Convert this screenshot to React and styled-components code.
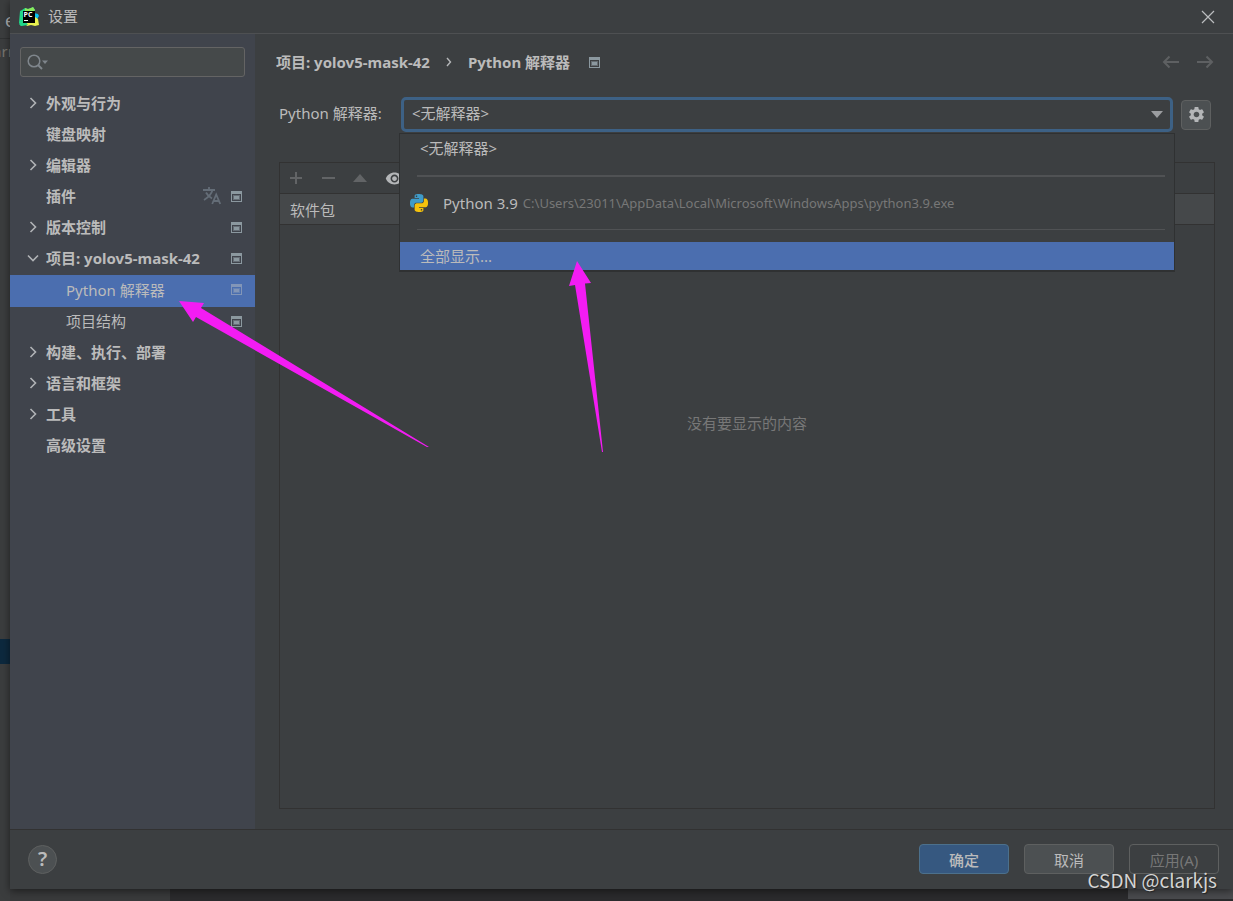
import styled, { createGlobalStyle } from 'styled-components';
import { MdSettings, MdVisibility } from 'react-icons/md';

const menuItems = [
  { label: '外观与行为', arrow: 'right' },
  { label: '键盘映射' },
  { label: '编辑器', arrow: 'right' },
  { label: '插件', translate: true, project: true },
  { label: '版本控制', arrow: 'right', project: true },
  { label: '项目: yolov5-mask-42', arrow: 'down', project: true },
  { label: 'Python 解释器', child: true, project: true, selected: true },
  { label: '项目结构', child: true, project: true },
  { label: '构建、执行、部署', arrow: 'right' },
  { label: '语言和框架', arrow: 'right' },
  { label: '工具', arrow: 'right' },
  { label: '高级设置' },
];

function App() {
  return (
    <>
      <GlobalStyle />
      <Styled.Desktop>
        <Backdrop />
        <Styled.Dialog>
          <TitleBar />
          <Styled.Body>
            <Sidebar />
            <InterpreterPage />
          </Styled.Body>
          <Footer />
        </Styled.Dialog>
        <Styled.StatusBar>
          <Styled.StatusTip />
        </Styled.StatusBar>
        <Pointers />
        <Styled.Watermark>CSDN @clarkjs</Styled.Watermark>
      </Styled.Desktop>
    </>
  );
}

export default App;

function Backdrop() {
  return (
    <Styled.Backdrop aria-hidden="true">
      <Styled.BackdropTab>e</Styled.BackdropTab>
      <Styled.BackdropText>arn</Styled.BackdropText>
      <Styled.BackdropSelection />
    </Styled.Backdrop>
  );
}

function TitleBar() {
  return (
    <Styled.TitleBar>
      <PyCharmIcon />
      <Styled.Title>设置</Styled.Title>
      <Styled.IconButton type="button" aria-label="关闭">
        <svg width="14" height="14" viewBox="0 0 14 14" stroke="#bbbdbf" strokeWidth="1.2">
          <path d="M1 1l12 12M13 1L1 13" />
        </svg>
      </Styled.IconButton>
    </Styled.TitleBar>
  );
}

function Sidebar() {
  return (
    <Styled.Sidebar>
      <Styled.Search>
        <SearchIcon />
        <Styled.SearchInput type="text" aria-label="搜索" />
      </Styled.Search>
      <Styled.Menu>
        {menuItems.map((item) => (
          <li key={item.label}>
            <Styled.MenuItem type="button" $child={item.child} $selected={item.selected}>
              <Styled.MenuArrow>{item.arrow && <Chevron down={item.arrow === 'down'} />}</Styled.MenuArrow>
              <Styled.MenuLabel>{item.label}</Styled.MenuLabel>
              {item.translate && <TranslateIcon />}
              {item.project && <ProjectIcon faded={item.selected} />}
            </Styled.MenuItem>
          </li>
        ))}
      </Styled.Menu>
    </Styled.Sidebar>
  );
}

function InterpreterPage() {
  return (
    <Styled.Page>
      <Styled.PageHeader>
        <Styled.Crumb>项目: yolov5-mask-42</Styled.Crumb>
        <svg width="6" height="10" viewBox="0 0 6 10" fill="none" stroke="#b5b7b9" strokeWidth="1.4">
          <path d="M1 1l3.5 4L1 9" />
        </svg>
        <Styled.Crumb>Python 解释器</Styled.Crumb>
        <Styled.CrumbIcon>
          <ProjectIcon />
        </Styled.CrumbIcon>
        <Styled.HistoryButtons>
          <Styled.IconButton type="button" aria-label="后退">
            <HistoryArrow />
          </Styled.IconButton>
          <Styled.IconButton type="button" aria-label="前进">
            <HistoryArrow forward />
          </Styled.IconButton>
        </Styled.HistoryButtons>
      </Styled.PageHeader>

      <Styled.Field>
        <Styled.Label htmlFor="interpreter">Python 解释器:</Styled.Label>
        <Styled.SelectWrapper>
          <Styled.Select id="interpreter" defaultValue="none">
            <option value="none">&lt;无解释器&gt;</option>
            <option value="python39">Python 3.9</option>
          </Styled.Select>
          <Styled.SelectArrow width="12" height="7" viewBox="0 0 12 7">
            <path d="M0 0h12L6 7z" fill="#9b9da0" />
          </Styled.SelectArrow>
          <Styled.Popup role="listbox" aria-label="Python 解释器">
            <Styled.Option type="button" role="option">
              &lt;无解释器&gt;
            </Styled.Option>
            <Styled.Separator $size={2} />
            <Styled.PythonOption type="button" role="option">
              <PythonIcon />
              <span>Python 3.9</span>
              <Styled.Path>C:\Users\23011\AppData\Local\Microsoft\WindowsApps\python3.9.exe</Styled.Path>
            </Styled.PythonOption>
            <Styled.Separator $size={1} />
            <Styled.Option type="button" role="option" aria-selected="true" $active>
              全部显示...
            </Styled.Option>
          </Styled.Popup>
        </Styled.SelectWrapper>
        <Styled.GearButton type="button" aria-label="解释器设置">
          <MdSettings size={19} />
        </Styled.GearButton>
      </Styled.Field>

      <Styled.Packages>
        <Styled.Toolbar>
          <Styled.IconButton type="button" aria-label="添加">
            <svg width="14" height="14" viewBox="0 0 14 14" stroke="#626466" strokeWidth="2">
              <path d="M7 1v12M1 7h12" />
            </svg>
          </Styled.IconButton>
          <Styled.IconButton type="button" aria-label="移除">
            <svg width="14" height="14" viewBox="0 0 14 14" stroke="#626466" strokeWidth="2">
              <path d="M1 7h13" />
            </svg>
          </Styled.IconButton>
          <Styled.IconButton type="button" aria-label="升级">
            <svg width="14" height="14" viewBox="0 0 14 14" fill="#626466">
              <path d="M0 11l7-8 7 8z" />
            </svg>
          </Styled.IconButton>
          <Styled.IconButton type="button" aria-label="显示早期版本">
            <MdVisibility size={19} color="#b4b6b8" />
          </Styled.IconButton>
        </Styled.Toolbar>
        <Styled.Table>
          <thead>
            <tr>
              <th scope="col">软件包</th>
            </tr>
          </thead>
        </Styled.Table>
        <Styled.Empty>没有要显示的内容</Styled.Empty>
      </Styled.Packages>
    </Styled.Page>
  );
}

function Footer() {
  return (
    <Styled.Footer>
      <Styled.HelpButton type="button" aria-label="帮助">
        ?
      </Styled.HelpButton>
      <Styled.FooterButtons>
        <Styled.Button type="button" $primary>
          确定
        </Styled.Button>
        <Styled.Button type="button">取消</Styled.Button>
        <Styled.Button type="button" disabled>
          应用(A)
        </Styled.Button>
      </Styled.FooterButtons>
    </Styled.Footer>
  );
}

function Pointers() {
  return (
    <Styled.Pointers width="620" height="460" viewBox="0 0 620 460" fill="#f31cf3">
      <path d="M179 301L204 303L201 308L429 447L427 447L196 317L193 322Z" />
      <path d="M577 261L591 283L585 283.500L603 452L602 452L575 285L569 286Z" />
    </Styled.Pointers>
  );
}

function PyCharmIcon() {
  return (
    <svg width="20" height="20" viewBox="0 0 20 20">
      <path d="M1 4l2-1 3-2 3 1 3-1 2-1 2 3-3 8-5 6-6 2-2-3z" fill="#21d789" />
      <path d="M6 1l3 1 3-1 2-1 2 3-2 3-8-1z" fill="#8bea5c" />
      <path d="M15 6l4 1 1 2-3 5-3-2z" fill="#07c3f2" />
      <path d="M5 15l11-5 3 2 1 6-4 1-4-1-4 1z" fill="#e9f24f" />
      <path d="M0 17l7-2 2 3-7 1z" fill="#21d789" />
      <rect x="4" y="4" width="12" height="12" fill="#000" />
      <rect x="5" y="13" width="4" height="1" fill="#fff" />
      <text x="4.500" y="10" fontFamily="Open Sans, sans-serif" fontSize="7" fontWeight="700" fill="#fff">
        PC
      </text>
    </svg>
  );
}

function SearchIcon() {
  return (
    <svg width="22" height="16" viewBox="0 0 22 16" fill="none" stroke="#7f868c" strokeWidth="1.500">
      <circle cx="7" cy="7" r="5.800" />
      <path d="M11 11l4 4" strokeWidth="2" />
      <path d="M15 6.500h6l-3 3.500z" fill="#7f868c" stroke="none" />
    </svg>
  );
}

function TranslateIcon() {
  return (
    <svg width="18" height="18" viewBox="0 0 18 18" fill="none" stroke="#646d77" strokeWidth="1.800">
      <path d="M0 3h12M6 0v3M9.500 3C8.500 7 5 10.500 1 13M3 5.500C4.500 8.500 6.500 10 9 11.500" />
      <path d="M9.200 17l4-9.500 4 9.500M10.500 14h5.500" />
    </svg>
  );
}

function Chevron({ down }) {
  return (
    <svg width="12" height="12" viewBox="0 0 12 12" fill="none" stroke="#b0b3b6" strokeWidth="1.600">
      <path d={down ? 'M1 3.500l5 5 5-5' : 'M3.500 1l5 5-5 5'} />
    </svg>
  );
}

function ProjectIcon({ faded }) {
  return (
    <svg width="11" height="11" viewBox="0 0 11 11" fill={faded ? '#8296b8' : '#8b989f'}>
      <path d="M0 0h11v11H0zM1 3v7h9V3z" fillRule="evenodd" />
      <path d="M2 4h7v5H2z" opacity="0.500" />
      <path d="M3 5h5v3H3z" />
    </svg>
  );
}

function HistoryArrow({ forward }) {
  return (
    <svg width="18" height="14" viewBox="0 0 18 14" fill="none" stroke="#5e6062" strokeWidth="2">
      <path d={forward ? 'M1 7h15M10.500 1.500L16 7l-5.500 5.500' : 'M17 7H2M7.500 1.500L2 7l5.500 5.500'} />
    </svg>
  );
}

function PythonIcon() {
  return (
    <svg width="18" height="18" viewBox="0 0 24 24">
      <path
        fill="#3f9bc8"
        d="M14.25.18l.9.2.73.26.59.3.45.32.34.34.25.34.16.33.1.3.04.26.02.2-.01.13V8.5l-.05.63-.13.55-.21.46-.26.38-.3.31-.33.25-.35.19-.35.14-.33.1-.3.07-.26.04-.21.02H8.77l-.69.05-.59.14-.5.22-.41.27-.33.32-.27.35-.2.36-.15.37-.1.35-.07.32-.04.27-.02.21v3.06H3.17l-.21-.03-.28-.07-.32-.12-.35-.18-.36-.26-.36-.36-.35-.46-.32-.59-.28-.73-.21-.88-.14-1.05-.05-1.23.06-1.22.16-1.04.24-.87.32-.71.36-.57.4-.44.42-.33.42-.24.4-.16.36-.1.32-.05.24-.01h.16l.06.01h8.16v-.83H6.18l-.01-2.75-.02-.37.05-.34.11-.31.17-.28.25-.26.31-.23.38-.2.44-.18.51-.15.58-.12.64-.1.71-.06.77-.04.84-.02 1.27.05zm-6.3 1.98l-.23.33-.08.41.08.41.23.34.33.22.41.09.41-.09.33-.22.23-.34.08-.41-.08-.41-.23-.33-.33-.22-.41-.09-.41.09z"
      />
      <path
        fill="#f5c20c"
        d="M21.04 6.11l.28.06.32.12.35.18.36.27.36.35.35.47.32.59.28.73.21.88.14 1.04.05 1.23-.06 1.23-.16 1.04-.24.86-.32.71-.36.57-.4.45-.42.33-.42.24-.4.16-.36.09-.32.05-.24.02-.16-.01h-8.22v.82h5.84l.01 2.76.02.36-.05.34-.11.31-.17.29-.25.25-.31.24-.38.2-.44.17-.51.15-.58.13-.64.09-.71.07-.77.04-.84.01-1.27-.04-1.07-.14-.9-.2-.73-.25-.59-.3-.45-.33-.34-.34-.25-.34-.16-.33-.1-.3-.04-.25-.02-.2.01-.13v-5.34l.05-.64.13-.54.21-.46.26-.38.3-.32.33-.24.35-.2.35-.14.33-.1.3-.06.26-.04.21-.02.13-.01h5.84l.69-.05.59-.14.5-.21.41-.28.33-.32.27-.35.2-.36.15-.36.1-.35.07-.32.04-.28.02-.21V6.07h2.09zM14.57 20.36l-.23.33-.08.41.08.41.23.33.33.23.41.08.41-.08.33-.23.23-.33.08-.41-.08-.41-.23-.33-.33-.23-.41-.08-.41.08z"
      />
    </svg>
  );
}

const GlobalStyle = createGlobalStyle`
  * {
    box-sizing: border-box;
  }

  body {
    margin: 0;
    background: #3c3f41;
    color: #bbbbbb;
    font-family: 'Noto Sans', 'Noto Sans CJK SC', sans-serif;
    font-size: 15px;
    line-height: 20px;
  }

  button,
  input,
  select {
    margin: 0;
    color: inherit;
    font: inherit;
  }

  svg {
    flex-shrink: 0;
  }
`;

const IconButton = styled.button`
  display: flex;
  align-items: center;
  justify-content: center;
  padding: 0;
  border: none;

  background: transparent;
`;

const Option = styled.button`
  display: flex;
  align-items: center;
  width: 100%;
  height: 28px;
  padding: 0 20px;
  border: none;

  background: ${({ $active }) => ($active ? '#4b6eaf' : 'transparent')};
  text-align: left;
`;

const Styled = {
  Desktop: styled.div`
    position: relative;
    display: grid;
    grid-template-columns: 10px 1fr;
    grid-template-rows: 1fr 12px;
    min-height: 100vh;
    overflow: hidden;
  `,
  Backdrop: styled.div`
    grid-row: 1 / 3;
    overflow: hidden;

    background: #3b3d3e;
    color: #77756f;
  `,
  BackdropTab: styled.div`
    height: 39px;
    padding: 8px 0 0 5px;
    border-bottom: 1px solid #303233;

    color: #b0b0b0;
    font-size: 18px;
    line-height: 24px;
  `,
  BackdropText: styled.div`
    display: flex;
    justify-content: center;
    height: 600px;
    padding-top: 2px;
  `,
  BackdropSelection: styled.div`
    height: 25px;

    background: #0d293e;
  `,
  Dialog: styled.div`
    z-index: 1;
    display: flex;
    flex-direction: column;

    background: #3c3f41;
    box-shadow: 0 2px 8px rgba(0, 0, 0, 0.5);
  `,
  StatusBar: styled.div`
    display: flex;
    justify-content: flex-end;
    border-left: 160px solid #393a3b;

    background: #2b2b2d;
  `,
  StatusTip: styled.div`
    width: 105px;
    height: 10px;

    background: #4a4b4e;
  `,
  TitleBar: styled.header`
    display: flex;
    align-items: center;
    height: 34px;
    padding: 0 18px 0 9px;
    border-bottom: 1px solid #4e5052;
  `,
  Title: styled.h1`
    flex: 1;
    margin: 0 0 0 9px;
    padding-bottom: 2px;

    font-size: 15px;
    font-weight: 400;
  `,
  IconButton,
  Body: styled.div`
    display: flex;
    flex: 1;
  `,
  Sidebar: styled.nav`
    width: 245px;
    padding-top: 13px;

    background: #40444c;
  `,
  Search: styled.label`
    display: flex;
    align-items: center;
    height: 30px;
    margin: 0 10px;
    padding: 0 6px;
    border: 1px solid #646464;
    border-radius: 3px;

    background: #45494a;
  `,
  SearchInput: styled.input`
    flex: 1;
    min-width: 0;
    border: none;
    outline: none;

    background: transparent;
  `,
  Menu: styled.ul`
    margin: 12px 0 0;
    padding: 0;

    list-style: none;
  `,
  MenuItem: styled.button`
    display: flex;
    align-items: center;
    gap: 10px;
    width: 100%;
    height: ${({ $selected }) => ($selected ? '32px' : '31px')};
    padding: 0 13px 3px ${({ $child }) => ($child ? '37px' : '17px')};
    border: none;

    background: ${({ $selected }) => ($selected ? '#4b6eaf' : 'transparent')};
    font-weight: ${({ $child }) => ($child ? 400 : 700)};
    text-align: left;
  `,
  MenuArrow: styled.span`
    display: flex;
    width: 12px;
    margin-right: -3px;
  `,
  MenuLabel: styled.span`
    flex: 1;

    white-space: nowrap;
  `,
  Page: styled.main`
    display: flex;
    flex: 1;
    flex-direction: column;
    min-width: 0;
    padding: 18px 18px 20px 24px;
  `,
  PageHeader: styled.div`
    display: flex;
    align-items: center;
    gap: 16px;
    height: 20px;
    margin-left: -3px;
  `,
  Crumb: styled.span`
    font-weight: 700;
    white-space: nowrap;
  `,
  CrumbIcon: styled.span`
    display: flex;
    margin-left: 3px;
  `,
  HistoryButtons: styled.div`
    display: flex;
    gap: 16px;
    margin-right: 1px;
    margin-left: auto;
  `,
  Field: styled.div`
    display: flex;
    align-items: center;
    height: 35px;
    margin: 25px 4px 30px 0;
  `,
  Label: styled.label`
    width: 122px;
    padding-bottom: 4px;

    white-space: nowrap;
  `,
  SelectWrapper: styled.div`
    position: relative;
    display: flex;
    flex: 1;
    align-items: center;
    height: 35px;
  `,
  Select: styled.select`
    width: 100%;
    height: 35px;
    padding: 0 8px 4px;
    border: 3px solid #3d6185;
    border-radius: 5px;
    outline: none;

    background: #3c3f41;
    appearance: none;
  `,
  SelectArrow: styled.svg`
    position: absolute;
    right: 10px;

    pointer-events: none;
  `,
  Popup: styled.div`
    position: absolute;
    top: 36px;
    right: -2px;
    left: -2px;
    z-index: 2;
    border: 1px solid #2f3132;
    border-bottom-width: 2px;

    background: #3c3f41;
  `,
  Option,
  PythonOption: styled(Option)`
    height: 52px;
    padding: 0 10px;

    svg {
      margin-right: 15px;
    }
  `,
  Path: styled.span`
    margin-left: 5px;

    color: #777777;
    font-size: 13px;
    white-space: nowrap;
  `,
  Separator: styled.div`
    height: ${({ $size }) => $size}px;
    margin: ${({ $size }) => ($size === 2 ? '13px 9px 0 17px' : '0 9px 12px 17px')};

    background: #505254;
  `,
  GearButton: styled(IconButton)`
    width: 30px;
    height: 30px;
    margin-left: 8px;
    border: 1px solid #5e6060;
    border-radius: 4px;

    background: #4c5052;
    color: #b4b6b8;
  `,
  Packages: styled.section`
    display: flex;
    flex: 1;
    flex-direction: column;
    border: 1px solid #323232;
  `,
  Toolbar: styled.div`
    display: flex;
    align-items: center;
    gap: 18px;
    height: 31px;
    padding: 0 9px;
    border-bottom: 1px solid #323232;
  `,
  Table: styled.table`
    width: 100%;
    border-collapse: collapse;

    th {
      height: 30px;
      padding: 3px 10px 0;
      border-bottom: 1px solid #323232;

      background: #45484a;
      font-weight: 400;
      text-align: left;
    }
  `,
  Empty: styled.p`
    margin: auto;
    padding-bottom: 186px;

    color: #777777;
  `,
  Footer: styled.footer`
    display: flex;
    align-items: center;
    justify-content: space-between;
    height: 60px;
    padding: 0 14px 1px 18px;
    border-top: 1px solid #323232;
  `,
  HelpButton: styled(IconButton)`
    width: 29px;
    height: 29px;
    border: 1px solid #5e6060;
    border-radius: 50%;

    background: #4c5052;
    font-size: 20px;
    font-weight: 600;
  `,
  FooterButtons: styled.div`
    display: flex;
    gap: 15px;
  `,
  Button: styled.button`
    width: 90px;
    height: 30px;
    padding: 2px 0 0;
    border: 1px solid ${({ $primary }) => ($primary ? '#4c708c' : '#5e6060')};
    border-radius: 4px;

    background: ${({ $primary }) => ($primary ? '#365880' : '#4c5052')};
    font-weight: ${({ $primary }) => ($primary ? 500 : 400)};

    &:disabled {
      background: transparent;
      color: #777777;
    }
  `,
  Pointers: styled.svg`
    position: absolute;
    top: 0;
    left: 0;
    z-index: 3;

    pointer-events: none;
  `,
  Watermark: styled.div`
    position: absolute;
    right: 16px;
    bottom: 9px;
    z-index: 3;

    color: #d4d4d4;
    font-family: 'Noto Sans CJK SC', sans-serif;
    font-size: 19px;
    line-height: 24px;
    text-shadow: 1px 1px 1px #222222;
  `,
};
